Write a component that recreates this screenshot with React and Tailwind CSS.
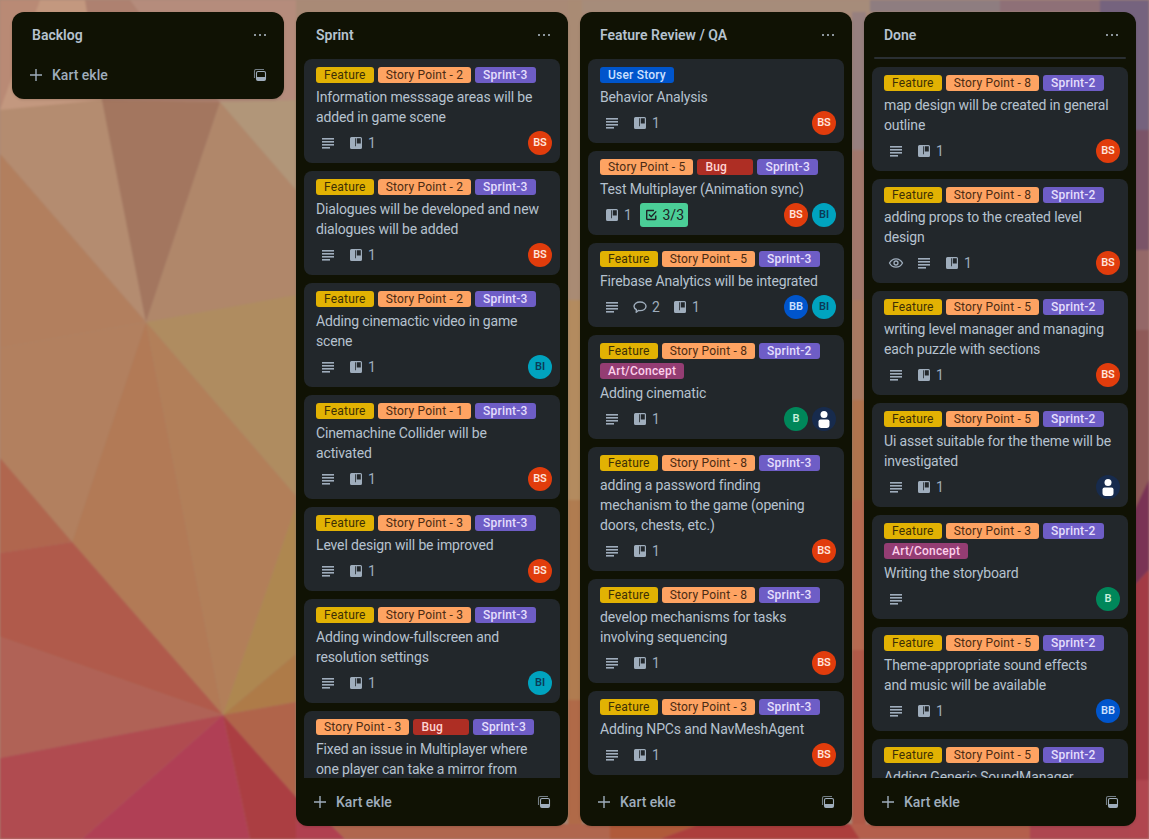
import React from "react";

const FONT = "font-['Roboto',sans-serif]";

/* label colours */
const LABELS = {
  F: { cls: "bg-[#e2b203] text-[#3d2f05]" },
  S: { cls: "bg-[#fea362] text-[#4a2a12]" },
  P: { cls: "bg-[#6e5dc6] text-[#e5dffd] font-medium" },
  B: { cls: "bg-[#ae2e24] text-[#ffd5d2] font-medium", name: "Bug" },
  A: { cls: "bg-[#943d73] text-[#fdd0ec] font-medium", name: "Art/Concept" },
  U: { cls: "bg-[#0055cc] text-[#cce0ff] font-medium", name: "User Story" },
};

const feat = { k: "F", name: "Feature" };
const sp = (n) => ({ k: "S", name: `Story Point - ${n}` });
const spr = (n) => ({ k: "P", name: `Sprint-${n}` });
const bug = { k: "B", name: "Bug" };
const art = { k: "A", name: "Art/Concept" };
const us = { k: "U", name: "User Story" };

const SPRINT = [
  { labels: [feat, sp(2), spr(3)], title: "Information messsage areas will be added in game scene", icons: ["lines", "board"], users: ["BS"] },
  { labels: [feat, sp(2), spr(3)], title: "Dialogues will be developed and new dialogues will be added", icons: ["lines", "board"], users: ["BS"] },
  { labels: [feat, sp(2), spr(3)], title: "Adding cinemactic video in game scene", icons: ["lines", "board"], users: ["BI"] },
  { labels: [feat, sp(1), spr(3)], title: "Cinemachine Collider will be\nactivated", icons: ["lines", "board"], users: ["BS"] },
  { labels: [feat, sp(3), spr(3)], title: "Level design will be improved", icons: ["lines", "board"], users: ["BS"] },
  { labels: [feat, sp(3), spr(3)], title: "Adding window-fullscreen and resolution settings", icons: ["lines", "board"], users: ["BI"] },
  { labels: [sp(3), bug, spr(3)], title: "Fixed an issue in Multiplayer where\none player can take a mirror from\nthe other player", icons: ["lines", "board"], users: ["BS"] },
];

const REVIEW = [
  { labels: [us], title: "Behavior Analysis", icons: ["lines", "board"], users: ["BS"] },
  { labels: [sp(5), bug, spr(3)], title: "Test Multiplayer (Animation sync)", icons: ["board", "check"], users: ["BS", "BI"] },
  { labels: [feat, sp(5), spr(3)], title: "Firebase Analytics will be integrated", icons: ["lines", "comment", "board"], users: ["BB", "BI"] },
  { labels: [feat, sp(8), spr(2), art], title: "Adding cinematic", icons: ["lines", "board"], users: ["B", "U"] },
  { labels: [feat, sp(8), spr(3)], title: "adding a password finding mechanism to the game (opening doors, chests, etc.)", icons: ["lines", "board"], users: ["BS"] },
  { labels: [feat, sp(8), spr(3)], title: "develop mechanisms for tasks involving sequencing", icons: ["lines", "board"], users: ["BS"] },
  { labels: [feat, sp(3), spr(3)], title: "Adding NPCs and NavMeshAgent", icons: ["lines", "board"], users: ["BS"] },
];

const DONE = [
  { labels: [feat, sp(8), spr(2)], title: "map design will be created in general outline", icons: ["lines", "board"], users: ["BS"] },
  { labels: [feat, sp(8), spr(2)], title: "adding props to the created level design", icons: ["eye", "lines", "board"], users: ["BS"] },
  { labels: [feat, sp(5), spr(2)], title: "writing level manager and managing each puzzle with sections", icons: ["lines", "board"], users: ["BS"] },
  { labels: [feat, sp(5), spr(2)], title: "Ui asset suitable for the theme will be investigated", icons: ["lines", "board"], users: ["U"] },
  { labels: [feat, sp(3), spr(2), art], title: "Writing the storyboard", icons: ["lines"], users: ["B"] },
  { labels: [feat, sp(5), spr(2)], title: "Theme-appropriate sound effects\nand music will be available", icons: ["lines", "board"], users: ["BB"] },
  { labels: [feat, sp(5), spr(2)], title: "Adding Generic SoundManager", icons: ["lines", "board"], users: ["BS"] },
];

// low-poly wallpaper pieces
const POLYS = [
  ["0,0 1149,0 1149,839 0,839", "#a88a78"],
  ["0,0 40,0 30,60 0,110", "#b98a75"],
  ["40,0 85,0 130,40 102,100 0,154 0,110", "#c3987f"],
  ["85,0 130,0 160,40 220,102 102,100", "#ae8170"],
  ["130,0 296,0 296,100 220,102 160,40", "#b58c7c"],
  ["0,110 102,100 146,322 0,154", "#b48c70"],
  ["102,100 220,102 146,322", "#a3765f"],
  ["220,102 296,190 296,295 146,322", "#b0876a"],
  ["220,102 296,100 296,190", "#b19679"],
  ["146,322 296,295 296,496", "#af8c60"],
  ["0,154 146,322 0,348", "#b27f5e"],
  ["0,348 146,322 72,542 0,458", "#b2805f"],
  ["146,322 72,542 223,715", "#b27a56"],
  ["146,322 296,496 296,506 223,715", "#b27f59"],
  ["296,506 296,654 223,715", "#ae8750"],
  ["296,654 296,702 223,715", "#ae7b48"],
  ["223,715 296,702 296,797", "#b0644a"],
  ["0,458 72,542 0,553", "#b0664e"],
  ["0,553 72,542 223,715 0,637", "#b05a4b"],
  ["0,637 223,715 0,758", "#b06256"],
  ["0,758 223,715 82,839 0,839", "#b04b50"],
  ["82,839 223,715 250,839", "#b03f55"],
  ["223,715 296,797 330,839 250,839", "#ab3e42"],
  ["296,797 330,839 296,839", "#ae4650"],
  // slivers and strips behind the other lists
  ["296,0 568,0 568,300 296,300", "#a98a76"],
  ["296,824 330,824 345,839 296,839", "#b04050"],
  ["330,824 610,824 610,839 345,839", "#b0664e"],
  ["568,300 582,300 582,500 568,500", "#b38b5f"],
  ["568,500 582,500 582,700 568,700", "#b07c50"],
  ["568,700 582,700 582,824 568,824", "#b06a48"],
  ["568,0 582,0 582,300 568,300", "#a98b74"],
  ["610,824 700,824 660,839 610,839", "#b05a3a"],
  ["700,824 850,824 860,839 660,839", "#ac3e3c"],
  ["850,824 1030,824 1030,839 860,839", "#b45f4c"],
  ["1030,824 1149,824 1149,839 1030,839", "#ae4650"],
  ["582,0 870,0 870,12 582,12", "#a68c7a"],
  ["852,12 866,12 866,150 852,150", "#97807f"],
  ["852,150 866,150 866,300 852,300", "#a2786c"],
  ["852,300 866,300 866,400 852,400", "#a87a62"],
  ["852,400 866,400 866,500 852,500", "#b0744e"],
  ["852,500 866,500 866,650 852,650", "#b56a50"],
  ["852,650 866,650 866,824 852,824", "#b05a48"],
  ["870,0 1000,0 1000,12 870,12", "#8e7d80"],
  ["1000,0 1100,0 1100,12 1000,12", "#8e7077"],
  ["1100,0 1149,0 1149,130 1100,130", "#75637e"],
  ["1130,130 1149,130 1149,250 1130,250", "#7a5468"],
  ["1130,250 1149,250 1149,330 1130,330", "#946868"],
  ["1130,330 1149,330 1149,520 1130,520", "#8f5a58"],
  ["1130,520 1149,480 1149,570 1130,590", "#7a3355"],
  ["1130,590 1149,570 1149,780 1130,780", "#a33b45"],
  ["1130,780 1149,780 1149,839 1130,839", "#b0464f"],
];

function Icon({ name, className = "" }) {
  if (name === "lines") {
    return (
      <svg viewBox="0 0 16 16" className={`w-4 h-4 ${className}`} fill="currentColor">
        <rect x="2" y="3" width="12" height="1.6" />
        <rect x="2" y="6" width="12" height="1.6" />
        <rect x="2" y="9" width="12" height="1.6" />
        <rect x="2" y="12" width="8" height="1.6" />
      </svg>
    );
  }
  if (name === "board") {
    return (
      <svg viewBox="0 0 16 16" className={`w-4 h-4 ${className}`} fill="currentColor">
        <path
          fillRule="evenodd"
          d="M3.5 2h9A1.5 1.5 0 0 1 14 3.5v9a1.5 1.5 0 0 1-1.5 1.5h-9A1.5 1.5 0 0 1 2 12.5v-9A1.5 1.5 0 0 1 3.5 2zM8.800 3.200h4v5.300h-4zM7 3.200h.8v8H7z"
        />
      </svg>
    );
  }
  if (name === "comment") {
    return (
      <svg viewBox="0 0 16 16" className={`w-4 h-4 ${className}`} fill="none" stroke="currentColor" strokeWidth="1.4">
        <path d="M8 3c3.4 0 6 1.9 6 4.3s-2.6 4.3-6 4.3c-.6 0-1.1 0-1.6-.1L4.2 13.300l.2-2.600C2.900 9.900 2 8.700 2 7.300 2 4.900 4.600 3 8 3z" strokeLinejoin="round" />
      </svg>
    );
  }
  if (name === "eye") {
    return (
      <svg viewBox="0 0 16 16" className={`w-4 h-4 ${className}`} fill="none" stroke="currentColor" strokeWidth="1.3">
        <path d="M1.500 8C3 5.200 5.300 3.800 8 3.800s5 1.400 6.500 4.200C13 10.800 10.700 12.200 8 12.200S3 10.800 1.500 8z" />
        <circle cx="8" cy="8" r="2" />
      </svg>
    );
  }
  if (name === "check") {
    return (
      <svg viewBox="0 0 16 16" className={`w-4 h-4 ${className}`} fill="none" stroke="currentColor" strokeWidth="1.5">
        <path d="M13 8.500V12.500a.5.5 0 0 1-.5.5h-9a.5.5 0 0 1-.5-.5v-9a.5.5 0 0 1 .5-.5H11" />
        <path d="M5.500 7.500L8 10l5.500-6" />
      </svg>
    );
  }
  return null;
}

function TemplateIcon() {
  return (
    <svg viewBox="0 0 16 16" className="w-4 h-4 text-[#9fadbc]" fill="none" stroke="currentColor" strokeWidth="1.100">
      <path d="M2.500 11V4A1.500 1.500 0 0 1 4 2.500h8" opacity="0.7" />
      <rect x="4.500" y="4.500" width="9" height="9" rx="1.500" />
      <rect x="5" y="10" width="8" height="3.200" fill="currentColor" stroke="none" />
    </svg>
  );
}

function Avatar({ who }) {
  if (who === "U") {
    return (
      <div className="w-6 h-6 rounded-full bg-[#172b4d] overflow-hidden flex flex-col items-center">
        <svg viewBox="0 0 24 24" className="w-6 h-6" fill="#fff">
          <circle cx="12" cy="7.500" r="3.500" />
          <path d="M8.500 12.500h7a2 2 0 0 1 2 2v3.500a3 3 0 0 1-3 3h-5a3 3 0 0 1-3-3v-3.500a2 2 0 0 1 2-2z" />
        </svg>
      </div>
    );
  }
  const styles = {
    BS: "bg-[#e13c0c] text-[#ffe4dc]",
    BI: "bg-[#00a3bf] text-[#0b3b57]",
    BB: "bg-[#0055cc] text-[#cce0ff]",
    B: "bg-[#00875a] text-[#c8f0dd]",
  };
  return (
    <div className={`w-6 h-6 rounded-full flex items-center justify-center text-[11px] font-semibold ${styles[who]}`}>
      {who}
    </div>
  );
}

function Badge({ name }) {
  if (name === "lines" || name === "eye") {
    return (
      <div className="flex items-center pr-1 mr-2">
        <Icon name={name} />
      </div>
    );
  }
  if (name === "check") {
    return (
      <div className="flex items-center h-6 -ml-1 px-1 w-12 gap-1 rounded-[3px] bg-[#4bce97] text-[#1d2125] text-sm">
        <Icon name="check" />
        <span>3/3</span>
      </div>
    );
  }
  const count = name === "comment" ? 2 : 1;
  return (
    <div className="flex items-center gap-1 pr-1 mr-1 text-sm">
      <Icon name={name} />
      <span className="w-2 mr-1">{count}</span>
    </div>
  );
}

function Card({ card }) {
  return (
    <div className="rounded-lg bg-[#22272b] px-3 pt-2 pb-2 shrink-0">
      <div className="flex flex-wrap gap-1 mb-1">
        {card.labels.map((l, i) => (
          <span
            key={i}
            className={`h-4 min-w-14 px-2 rounded-[3px] text-xs leading-4 tracking-[0.2px] whitespace-nowrap ${LABELS[l.k].cls}`}
          >
            {l.name}
          </span>
        ))}
      </div>
      <p className="text-sm leading-5 tracking-[-0.15px] text-[#b6c2cf] whitespace-pre-line">{card.title}</p>
      <div className="flex items-center justify-between h-6 mt-1 -mr-1">
        <div className="flex items-center pl-1 text-[#9fadbc]">
          {card.icons.map((n) => (
            <Badge key={n} name={n} />
          ))}
        </div>
        <div className="flex gap-1">
          {card.users.map((u) => (
            <Avatar key={u} who={u} />
          ))}
        </div>
      </div>
    </div>
  );
}

function Column({ title, cards, divider }) {
  const tall = cards.length > 0;
  return (
    <div className={`relative w-[272px] shrink-0 rounded-xl bg-[#101204] flex flex-col shadow-sm ${tall ? "h-[814px]" : ""}`}>
      <div className="h-[39px] shrink-0 flex items-center justify-between pl-5 pr-4 pt-[6px]">
        <h2 className="text-sm font-semibold text-[#b6c2cf]">{title}</h2>
        <svg viewBox="0 0 16 16" className="w-4 h-4 text-[#b6c2cf]" fill="currentColor">
          <circle cx="3" cy="8" r="1" />
          <circle cx="8" cy="8" r="1" />
          <circle cx="13" cy="8" r="1" />
        </svg>
      </div>
      {divider && <div className="mx-[10px] mt-[6px] h-[2px] rounded bg-[#2a2f33] shrink-0" />}
      {tall && (
        <div className="flex-1 min-h-0 overflow-hidden px-2 pt-2 flex flex-col gap-2">
          {cards.map((c, i) => (
            <Card key={i} card={c} />
          ))}
        </div>
      )}
      <div className="h-12 shrink-0 flex items-center justify-between pl-[16px] pr-[16px] text-[#9fadbc]">
        <div className="flex items-center gap-[8px]">
          <svg viewBox="0 0 16 16" className="w-4 h-4" fill="none" stroke="currentColor" strokeWidth="1.400">
            <path d="M8 2v12M2 8h12" />
          </svg>
          <span className="text-sm font-medium">Kart ekle</span>
        </div>
        <TemplateIcon />
      </div>
    </div>
  );
}

export default function App() {
  return (
    <div className={`relative h-screen overflow-hidden bg-[#a88a78] ${FONT}`}>
      <svg viewBox="0 0 1149 839" preserveAspectRatio="none" className="absolute inset-0 w-full h-full blur-[1px]">
        {POLYS.map(([pts, fill], i) => (
          <polygon key={i} points={pts} fill={fill} />
        ))}
      </svg>
      <div className="relative flex items-start gap-3 p-3">
        <Column title="Backlog" cards={[]} />
        <Column title="Sprint" cards={SPRINT} />
        <Column title="Feature Review / QA" cards={REVIEW} />
        <Column title="Done" cards={DONE} divider />
      </div>
    </div>
  );
}
